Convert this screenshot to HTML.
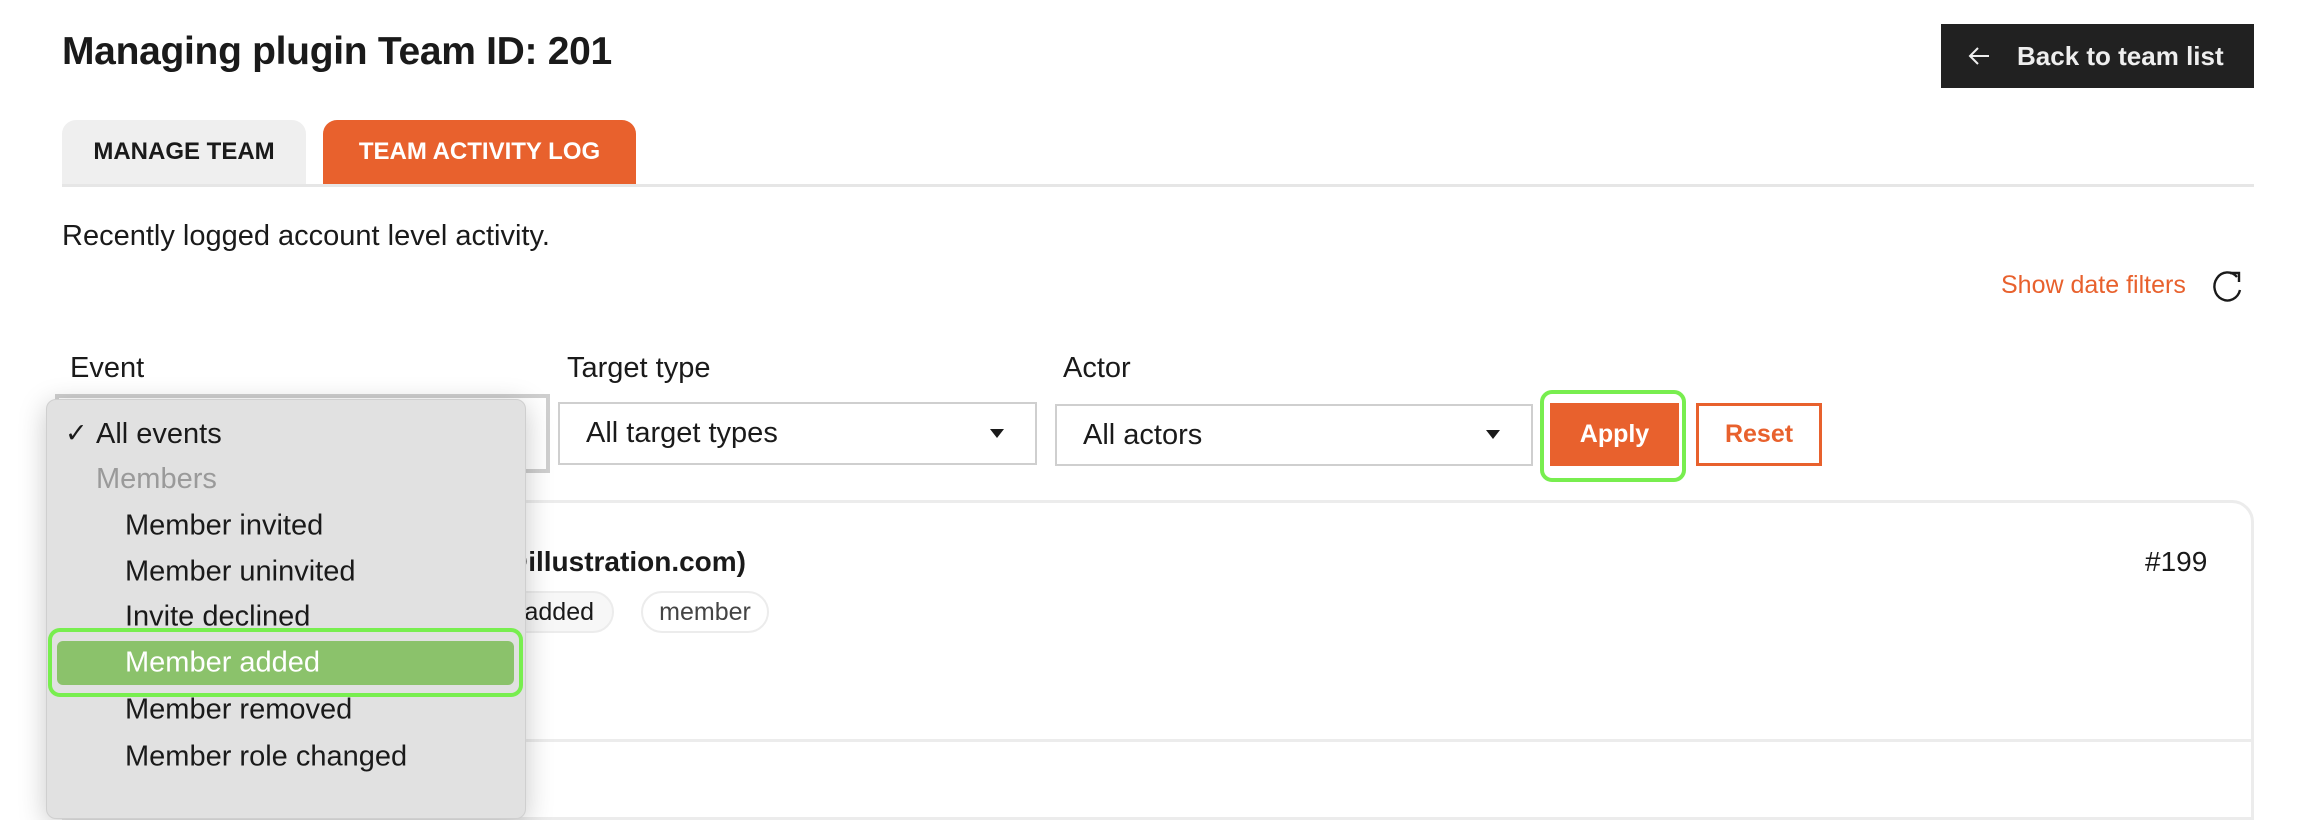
<!DOCTYPE html>
<html><head><meta charset="utf-8"><style>
*{box-sizing:border-box;margin:0;padding:0}
body{width:2304px;height:782px;overflow:hidden;background:#fff;font-family:"Liberation Sans",sans-serif;color:#1a1a1a;position:relative}
.a{position:absolute;white-space:nowrap}
.sel{position:absolute;border:2px solid #cfcfcf;background:#fff;font-size:29px;display:flex;align-items:center;padding-left:26px}
.tri{position:absolute;width:0;height:0;border-left:7px solid transparent;border-right:7px solid transparent;border-top:9px solid #1a1a1a}
.mi{position:absolute;left:125px;font-size:29px;color:#1a1a1a;transform:translateY(-50%)}
</style></head><body>
<div class="a" style="left:62px;top:30px;font-size:39px;font-weight:700;letter-spacing:-0.3px">Managing plugin Team ID: 201</div>
<div class="a" style="left:1941px;top:24px;width:313px;height:64px;background:#212121;color:#eee;font-size:26px;font-weight:700;display:flex;align-items:center">
<svg style="position:absolute;left:27px;top:22px" width="22" height="20" viewBox="0 0 22 20"><path d="M21 10H2M10 2L2 10l8 8" fill="none" stroke="#eee" stroke-width="2"/></svg>
<span style="position:absolute;left:76px">Back to team list</span></div>

<div class="a" style="left:62px;top:120px;width:244px;height:64px;background:#efefef;border-radius:14px 14px 0 0;font-size:24px;font-weight:700;display:flex;align-items:center;justify-content:center">MANAGE TEAM</div>
<div class="a" style="left:323px;top:120px;width:313px;height:64px;background:#e8612d;color:#fff;border-radius:14px 14px 0 0;font-size:24px;font-weight:700;display:flex;align-items:center;justify-content:center">TEAM ACTIVITY LOG</div>
<div class="a" style="left:62px;top:184px;width:2192px;height:3px;background:#e6e6e6"></div>

<div class="a" style="left:62px;top:220px;font-size:29px">Recently logged account level activity.</div>
<div class="a" style="left:2001px;top:271px;font-size:25px;color:#e8612d">Show date filters</div>
<svg class="a" style="left:2208px;top:268px" width="38" height="38" viewBox="0 0 38 38"><path d="M29 9A13 14 0 1 0 32 22" fill="none" stroke="#1a1a1a" stroke-width="2.4"/><path d="M22 5H31V14" fill="none" stroke="#1a1a1a" stroke-width="2.4"/></svg>

<div class="a" style="left:70px;top:352px;font-size:29px">Event</div>
<div class="a" style="left:567px;top:352px;font-size:29px">Target type</div>
<div class="a" style="left:1063px;top:352px;font-size:29px">Actor</div>

<div class="a" style="left:55px;top:394px;width:495px;height:79px;border:4px solid #cfcfcf;background:#fff"></div>
<div class="sel" style="left:558px;top:402px;width:479px;height:63px">All target types<div class="tri" style="left:430px;top:25px"></div></div>
<div class="sel" style="left:1055px;top:404px;width:478px;height:62px">All actors<div class="tri" style="left:429px;top:24px"></div></div>

<div class="a" style="left:1540px;top:390px;width:146px;height:92px;border:4px solid #78ee4f;border-radius:12px"></div>
<div class="a" style="left:1550px;top:403px;width:129px;height:63px;background:#e8612d;color:#fff;font-size:25px;font-weight:700;display:flex;align-items:center;justify-content:center">Apply</div>
<div class="a" style="left:1696px;top:403px;width:126px;height:63px;border:3px solid #e8612d;color:#e8612d;font-size:25px;font-weight:700;display:flex;align-items:center;justify-content:center">Reset</div>

<div class="a" style="left:62px;top:500px;width:2192px;height:320px;border:3px solid #ececec;border-radius:22px 22px 0 0"></div>
<div class="a" style="left:62px;top:739px;width:2192px;height:3px;background:#ececec"></div>
<div class="a" style="left:200px;top:546px;width:546px;text-align:right;font-size:28px;font-weight:700;overflow:hidden">Member (someone@illustration.com)</div>
<div class="a" style="left:2145px;top:546px;font-size:28px">#199</div>
<div class="a" style="left:400px;top:591px;width:214px;height:42px;border:2px solid #ececec;border-radius:21px;background:#f7f7f7;font-size:25px;display:flex;align-items:center;justify-content:flex-end;padding-right:18px">member added</div>
<div class="a" style="left:641px;top:591px;width:128px;height:42px;border:2px solid #ececec;border-radius:21px;font-size:25px;color:#444;display:flex;align-items:center;justify-content:center">member</div>

<div class="a" style="left:46px;top:399px;width:480px;height:420px;background:#e1e1e1;border-radius:10px;box-shadow:0 6px 28px rgba(0,0,0,.22);border:1px solid #cfcfcf"></div>
<div class="a" style="left:65px;top:418px;font-size:27px">✓</div>
<div class="a" style="left:96px;top:418px;font-size:29px">All events</div>
<div class="a" style="left:96px;top:463px;font-size:29px;color:#9a9a9a">Members</div>
<div class="mi" style="top:526px">Member invited</div>
<div class="mi" style="top:572px">Member uninvited</div>
<div class="mi" style="top:617px">Invite declined</div>
<div class="a" style="left:48px;top:628px;width:475px;height:69px;border:4px solid #78ee4f;border-radius:12px"></div>
<div class="a" style="left:57px;top:641px;width:457px;height:44px;background:#8bc26b;border-radius:6px"></div>
<div class="mi" style="top:663px;color:#fff">Member added</div>
<div class="mi" style="top:710px">Member removed</div>
<div class="mi" style="top:757px">Member role changed</div>
</body></html>
